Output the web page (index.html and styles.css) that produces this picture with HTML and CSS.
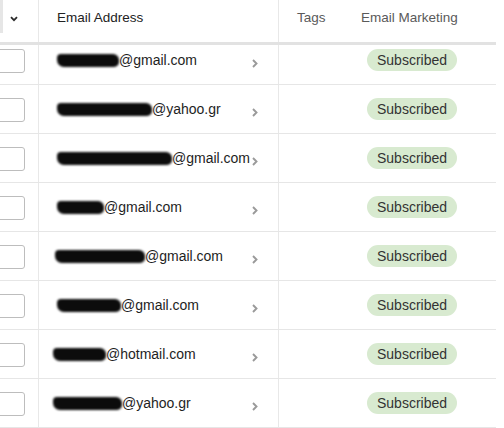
FILE: index.html
```html
<!DOCTYPE html>
<html>
<head>
<meta charset="utf-8">
<link rel="stylesheet" href="styles.css">
</head>
<body>
<div class="table">
  <div class="row head">
    <div class="cell c-check">
      <span class="strip"></span>
      <svg class="sort" width="8" height="6" viewBox="0 0 8 6"><path d="M1 1.2 L4 4.2 L7 1.2" fill="none" stroke="#2b2b2b" stroke-width="1.8"/></svg>
    </div>
    <div class="cell c-email"><span class="htext dark">Email Address</span></div>
    <div class="cell c-tags"><span class="htext">Tags</span></div>
    <div class="cell c-mkt"><span class="htext">Email Marketing</span></div>
  </div>
  <div class="body">
    <div class="row item first">
      <div class="cell c-check"><span class="box"></span></div>
      <div class="cell c-email"><span class="mask" style="width:62px"></span><span class="addr">@gmail.com</span><svg class="chev" width="8" height="11" viewBox="0 0 8 11"><path d="M2 2 L5.5 5.5 L2 9" fill="none" stroke="#9a9a9a" stroke-width="1.9"/></svg></div>
      <div class="cell c-tags"></div>
      <div class="cell c-mkt"><span class="badge">Subscribed</span></div>
    </div>
    <div class="row item">
      <div class="cell c-check"><span class="box"></span></div>
      <div class="cell c-email"><span class="mask" style="width:95px"></span><span class="addr">@yahoo.gr</span><svg class="chev" width="8" height="11" viewBox="0 0 8 11"><path d="M2 2 L5.5 5.5 L2 9" fill="none" stroke="#9a9a9a" stroke-width="1.9"/></svg></div>
      <div class="cell c-tags"></div>
      <div class="cell c-mkt"><span class="badge">Subscribed</span></div>
    </div>
    <div class="row item">
      <div class="cell c-check"><span class="box"></span></div>
      <div class="cell c-email"><span class="mask" style="width:115px"></span><span class="addr">@gmail.com</span><svg class="chev" width="8" height="11" viewBox="0 0 8 11"><path d="M2 2 L5.5 5.5 L2 9" fill="none" stroke="#9a9a9a" stroke-width="1.9"/></svg></div>
      <div class="cell c-tags"></div>
      <div class="cell c-mkt"><span class="badge">Subscribed</span></div>
    </div>
    <div class="row item">
      <div class="cell c-check"><span class="box"></span></div>
      <div class="cell c-email"><span class="mask" style="width:47px"></span><span class="addr">@gmail.com</span><svg class="chev" width="8" height="11" viewBox="0 0 8 11"><path d="M2 2 L5.5 5.5 L2 9" fill="none" stroke="#9a9a9a" stroke-width="1.9"/></svg></div>
      <div class="cell c-tags"></div>
      <div class="cell c-mkt"><span class="badge">Subscribed</span></div>
    </div>
    <div class="row item">
      <div class="cell c-check"><span class="box"></span></div>
      <div class="cell c-email"><span class="mask" style="width:90px;margin-left:-2px"></span><span class="addr">@gmail.com</span><svg class="chev" width="8" height="11" viewBox="0 0 8 11"><path d="M2 2 L5.5 5.5 L2 9" fill="none" stroke="#9a9a9a" stroke-width="1.9"/></svg></div>
      <div class="cell c-tags"></div>
      <div class="cell c-mkt"><span class="badge">Subscribed</span></div>
    </div>
    <div class="row item">
      <div class="cell c-check"><span class="box"></span></div>
      <div class="cell c-email"><span class="mask" style="width:64px"></span><span class="addr">@gmail.com</span><svg class="chev" width="8" height="11" viewBox="0 0 8 11"><path d="M2 2 L5.5 5.5 L2 9" fill="none" stroke="#9a9a9a" stroke-width="1.9"/></svg></div>
      <div class="cell c-tags"></div>
      <div class="cell c-mkt"><span class="badge">Subscribed</span></div>
    </div>
    <div class="row item">
      <div class="cell c-check"><span class="box"></span></div>
      <div class="cell c-email"><span class="mask" style="width:53px;margin-left:-4px"></span><span class="addr">@hotmail.com</span><svg class="chev" width="8" height="11" viewBox="0 0 8 11"><path d="M2 2 L5.5 5.5 L2 9" fill="none" stroke="#9a9a9a" stroke-width="1.9"/></svg></div>
      <div class="cell c-tags"></div>
      <div class="cell c-mkt"><span class="badge">Subscribed</span></div>
    </div>
    <div class="row item">
      <div class="cell c-check"><span class="box"></span></div>
      <div class="cell c-email"><span class="mask" style="width:69px;margin-left:-4px"></span><span class="addr">@yahoo.gr</span><svg class="chev" width="8" height="11" viewBox="0 0 8 11"><path d="M2 2 L5.5 5.5 L2 9" fill="none" stroke="#9a9a9a" stroke-width="1.9"/></svg></div>
      <div class="cell c-tags"></div>
      <div class="cell c-mkt"><span class="badge">Subscribed</span></div>
    </div>
  </div>
</div>
</body>
</html>
```
FILE: styles.css
```css
* { box-sizing: border-box; }
html, body { margin: 0; padding: 0; background: #fff; }
body {
  font-family: "Liberation Sans", Arial, sans-serif;
  color: #222;
  width: 504px;
  height: 428px;
  overflow: hidden;
}
.table { width: 496px; }
.row {
  display: grid;
  grid-template-columns: 39px 240px 66px 151px;
}
.cell {
  display: flex;
  align-items: center;
  min-width: 0;
}
.c-check, .c-email { border-right: 1px solid #e8e8e8; }

.head {
  height: 45px;
  border-bottom: 3px solid #e2e2e2;
}
.head .cell { align-items: flex-start; padding-top: 9px; }
.head .c-check { position: relative; padding-top: 16px; }
.strip {
  position: absolute;
  left: 0; top: 0;
  width: 3px; height: 33px;
  background: #e6e6e6;
}
.sort { margin-left: 10px; display: block; }
.htext { font-size: 13.5px; line-height: 18px; color: #5a5a5a; }
.htext.dark { color: #222; }
.head .c-email { padding-left: 18px; }
.head .c-tags { padding-left: 18px; }
.head .c-mkt { padding-left: 16px; }

.body { height: 383px; overflow: hidden; }
.item {
  height: 49px;
  border-bottom: 1px solid #e6e6e6;
}
.item.first { margin-top: -9px; }
.item .c-check { overflow: hidden; }
.box {
  display: block;
  width: 32px;
  height: 24px;
  margin-left: -7px;
  margin-top: 1px;
  border: 1px solid #bdbdbd;
  border-radius: 3px;
  background: #fff;
}
.item .c-email { padding-left: 18px; padding-right: 19px; }
.mask {
  display: inline-block;
  height: 13px;
  background: #0c0c0c;
  border-radius: 4px 6px 5px 7px;
  filter: blur(1.3px);
  flex: none;
}
.addr { font-size: 14px; color: #1e1e1e; white-space: nowrap; }
.chev { margin-left: auto; margin-top: 6px; display: block; flex: none; }
.item .c-mkt { padding-left: 22px; }
.badge {
  display: inline-block;
  height: 22px;
  line-height: 22px;
  padding: 0 10px;
  border-radius: 11px;
  background: #d8ead0;
  color: #333;
  font-size: 14px;
}
```
